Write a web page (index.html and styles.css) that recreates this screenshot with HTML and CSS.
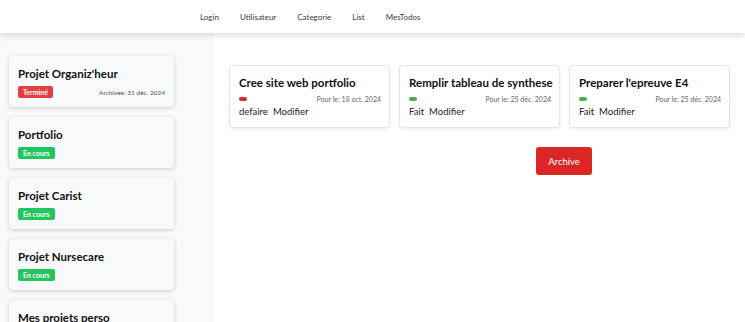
FILE: index.html
```html
<!DOCTYPE html>
<html lang="fr">
  <head>
    <meta charset="UTF-8" />
    <meta name="viewport" content="width=device-width, initial-scale=1.0" />
    <title>MesTodos</title>
    <link rel="stylesheet" href="styles.css">
  </head>
  <body>
    <!-- Barre de navigation -->
    <nav class="navbar">
      <a href="#">Login</a>
      <a href="#">Utilisateur</a>
      <a href="#">Categorie</a>
      <a href="#">List</a>
      <a href="#">MesTodos</a>
    </nav>

    <div class="layout">
      <!-- Liste des projets -->
      <aside class="sidebar">
        <div class="project">
          <h3>Projet Organiz'heur</h3>
          <div class="project-meta">
            <span class="badge done">Terminé</span>
            <span class="archived">Archivee: 31 déc. 2024</span>
          </div>
        </div>
        <div class="project">
          <h3>Portfolio</h3>
          <div class="project-meta">
            <span class="badge doing">En cours</span>
          </div>
        </div>
        <div class="project">
          <h3>Projet Carist</h3>
          <div class="project-meta">
            <span class="badge doing">En cours</span>
          </div>
        </div>
        <div class="project">
          <h3>Projet Nursecare</h3>
          <div class="project-meta">
            <span class="badge doing">En cours</span>
          </div>
        </div>
        <div class="project">
          <h3>Mes projets perso</h3>
          <div class="project-meta">
            <span class="badge doing">En cours</span>
          </div>
        </div>
      </aside>

      <!-- Taches du projet -->
      <main class="content">
        <div class="todos">
          <div class="todo">
            <h4>Cree site web portfolio</h4>
            <div class="todo-meta">
              <span class="pill red"></span>
              <span class="due">Pour le: 18 oct. 2024</span>
            </div>
            <div class="actions">
              <a href="#">defaire</a>
              <a href="#">Modifier</a>
            </div>
          </div>
          <div class="todo">
            <h4>Remplir tableau de synthese</h4>
            <div class="todo-meta">
              <span class="pill green"></span>
              <span class="due">Pour le: 25 déc. 2024</span>
            </div>
            <div class="actions">
              <a href="#">Fait</a>
              <a href="#">Modifier</a>
            </div>
          </div>
          <div class="todo">
            <h4>Preparer l'epreuve E4</h4>
            <div class="todo-meta">
              <span class="pill green"></span>
              <span class="due">Pour le: 25 déc. 2024</span>
            </div>
            <div class="actions">
              <a href="#">Fait</a>
              <a href="#">Modifier</a>
            </div>
          </div>
        </div>
        <div class="archive-row">
          <button class="btn-archive">Archive</button>
        </div>
      </main>
    </div>
  </body>
</html>
```

FILE: styles.css
```css
* {
  box-sizing: border-box;
}

body {
  margin: 0;
  font-family: "Lato", "Noto Sans", sans-serif;
  color: #111;
  background: #fff;
  height: 322px;
  overflow: hidden;
}

/* Navigation */
.navbar {
  height: 33px;
  display: flex;
  align-items: center;
  gap: 21px;
  padding-left: 200px;
  background: #fff;
  box-shadow: 0 3px 6px rgba(0, 0, 0, 0.12);
  position: relative;
  z-index: 2;
}

.navbar a {
  font-size: 8px;
  color: #3a3a3a;
  text-decoration: none;
}

.layout {
  display: flex;
  height: 289px;
}

/* Sidebar */
.sidebar {
  width: 212px;
  flex-shrink: 0;
  background: #f8f9fa;
  border-right: 1px solid #eceef0;
  padding: 23px 37px 0 9px;
  display: flex;
  flex-direction: column;
  gap: 10px;
}

.project {
  height: 51px;
  flex-shrink: 0;
  background: #f8f9fa;
  border-radius: 4px;
  box-shadow: 0 1px 4px rgba(0, 0, 0, 0.18);
  padding: 10px 9px 0 9px;
}

.project h3 {
  margin: 0;
  font-size: 11.5px;
  font-weight: 700;
  line-height: 15px;
}

.project-meta {
  display: flex;
  align-items: center;
  justify-content: space-between;
  margin-top: 5px;
}

.badge {
  font-size: 7px;
  font-weight: 700;
  color: #fff;
  padding: 2px 5px;
  border-radius: 2px;
  line-height: 8px;
}

.badge.done {
  background: #e53e3e;
}

.badge.doing {
  background: #22c55e;
}

.archived {
  font-size: 6.5px;
  color: #555;
}

/* Contenu */
.content {
  flex: 1;
  padding: 32px 15px 0 17px;
}

.todos {
  display: flex;
  gap: 9px;
}

.todo {
  width: 161px;
  height: 63px;
  flex-shrink: 0;
  background: #fff;
  border: 1px solid #e4e6e8;
  border-radius: 4px;
  box-shadow: 0 1px 3px rgba(0, 0, 0, 0.08);
  padding: 9px 8px 0 9px;
}

.todo h4 {
  margin: 0;
  font-size: 11.5px;
  font-weight: 700;
  line-height: 15px;
  white-space: nowrap;
}

.todo-meta {
  display: flex;
  align-items: center;
  justify-content: space-between;
  margin-top: 5px;
}

.pill {
  width: 8px;
  height: 4px;
  border-radius: 2px;
}

.pill.red {
  background: #dc2626;
}

.pill.green {
  background: #4caf50;
}

.due {
  font-size: 7px;
  color: #666;
}

.actions {
  display: flex;
  gap: 5px;
  margin-top: 3px;
}

.actions a {
  font-size: 9.5px;
  color: #222;
  text-decoration: none;
}

.archive-row {
  display: flex;
  padding-left: 307px;
  margin-top: 19px;
}

.btn-archive {
  width: 56px;
  height: 28px;
  background: #dc2626;
  color: #fff;
  border: none;
  border-radius: 3px;
  font-family: inherit;
  font-size: 9.5px;
}
```
